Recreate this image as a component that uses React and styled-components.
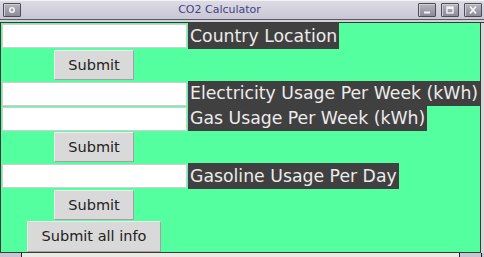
import React from "react";
import styled, { createGlobalStyle } from "styled-components";

const Global = createGlobalStyle`
  html, body { margin: 0; padding: 0; background: #e6e6e6; }
  body { font-family: "DejaVu Sans", sans-serif; }
`;

const Window = styled.div`
  width: 484px;
  height: 257px;
  display: flex;
  flex-direction: column;
  background: #e4e4e4;
  box-sizing: border-box;
  overflow: hidden;
`;

const TitleBar = styled.div`
  height: 21px;
  box-sizing: border-box;
  border-top: 1px solid #f2f2f2;
  border-bottom: 1px solid #5a5a62;
  background: linear-gradient(#dcdae4, #c9c7d3);
  display: flex;
  align-items: center;
  padding: 0 2px 0 3px;
`;

const TitleButton = styled.div`
  width: 18px;
  height: 14px;
  box-sizing: border-box;
  border: 1px solid #4e4e56;
  border-radius: 1px;
  background: linear-gradient(#b6b4bf, #8c8a96);
  box-shadow: inset 1px 1px 0 #cfcdd8;
  display: flex;
  align-items: center;
  justify-content: center;
  margin-left: ${(p) => p.$gap || 0}px;
`;

const Title = styled.div`
  flex: 1;
  text-align: center;
  font-family: "DejaVu Sans", sans-serif;
  font-size: 11px;
  color: #433f8a;
  line-height: 14px;
`;

const FrameGap = styled.div`
  height: 2px;
  background: #d2d0d8;
  border-bottom: 1px solid #3a3a3a;
`;

const Body = styled.div`
  flex: 1;
  display: flex;
`;

const Content = styled.div`
  width: 481px;
  box-sizing: border-box;
  border-left: 1px solid #3a3a3a;
  border-right: 1px solid #3a3a3a;
  border-bottom: 1px solid #3a3a3a;
  background: #54ff9f;
  display: grid;
  grid-template-columns: 187px 1fr;
  grid-template-rows: 26px 32px 25px 25px 32px 26px 31px 32px;
  align-content: start;
  height: 230px;
`;

const Entry = styled.input`
  grid-column: 1;
  align-self: center;
  justify-self: start;
  margin: 0 0 0 1px;
  width: 185px;
  height: 24px;
  box-sizing: border-box;
  border: 1px solid #cfcfcf;
  background: #ffffff;
  padding: 0 3px;
  outline: none;
`;

const Caption = styled.div`
  grid-column: 2;
  justify-self: start;
  align-self: stretch;
  background: #404040;
  color: #ececec;
  font-family: "DejaVu Sans", sans-serif;
  font-size: 17.3px;
  line-height: ${(p) => p.$h}px;
  height: ${(p) => p.$h}px;
  padding: 0 2px 0 2px;
  white-space: nowrap;
`;

const Button = styled.button`
  grid-column: 1;
  justify-self: center;
  align-self: center;
  width: ${(p) => (p.$wide ? 134 : 80)}px;
  height: ${(p) => (p.$wide ? 31 : 30)}px;
  box-sizing: border-box;
  margin: 0 0 0 -1px;
  padding: 0;
  background: #d9d9d9;
  border: 1px solid;
  border-color: #ededed #a2a2a2 #a2a2a2 #ededed;
  border-radius: 0;
  font-family: "DejaVu Sans", sans-serif;
  font-size: 14.5px;
  color: #222222;
`;

const Spacer = styled.div`
  grid-column: 2;
`;

const SideFrame = styled.div`
  flex: 1;
  background: #d8d8d8;
`;

const BottomFrame = styled.div`
  height: 4px;
  display: flex;
  background: #eceae4;
`;

const Handle = styled.div`
  width: ${(p) => p.$w}px;
  background: #c8c6d2;
  border-right: ${(p) => (p.$left ? "1px solid #222" : "0")};
  border-left: ${(p) => (p.$left ? "0" : "1px solid #222")};
`;

const Fill = styled.div`
  flex: 1;
`;

function Glyph({ kind }) {
  if (kind === "menu")
    return (
      <svg width="8" height="8" viewBox="0 0 8 8">
        <circle cx="4" cy="4" r="2.2" fill="none" stroke="#f4f4f4" strokeWidth="1.6" />
      </svg>
    );
  if (kind === "min")
    return (
      <svg width="10" height="8" viewBox="0 0 10 8">
        <rect x="2" y="5.5" width="6" height="2" fill="#f4f4f4" />
      </svg>
    );
  if (kind === "max")
    return (
      <svg width="10" height="8" viewBox="0 0 10 8">
        <rect x="2" y="1" width="6" height="6" fill="none" stroke="#f4f4f4" strokeWidth="1.4" />
        <rect x="2" y="1" width="6" height="2" fill="#f4f4f4" />
      </svg>
    );
  return (
    <svg width="10" height="8" viewBox="0 0 10 8">
      <path d="M2 0.5 L8 7.5 M8 0.5 L2 7.5" stroke="#f4f4f4" strokeWidth="1.8" />
    </svg>
  );
}

export default function App() {
  return (
    <>
      <Global />
      <Window>
        <TitleBar>
          <TitleButton>
            <Glyph kind="menu" />
          </TitleButton>
          <Title>CO2 Calculator</Title>
          <TitleButton>
            <Glyph kind="min" />
          </TitleButton>
          <TitleButton $gap={5}>
            <Glyph kind="max" />
          </TitleButton>
          <TitleButton $gap={5}>
            <Glyph kind="close" />
          </TitleButton>
        </TitleBar>
        <FrameGap />
        <Body>
          <Content>
            <Entry />
            <Caption $h={26}>Country Location</Caption>
            <Button>Submit</Button>
            <Spacer />
            <Entry />
            <Caption $h={25}>Electricity Usage Per Week (kWh)</Caption>
            <Entry />
            <Caption $h={25}>Gas Usage Per Week (kWh)</Caption>
            <Button>Submit</Button>
            <Spacer />
            <Entry />
            <Caption $h={26}>Gasoline Usage Per Day</Caption>
            <Button>Submit</Button>
            <Spacer />
            <Button $wide>Submit all info</Button>
            <Spacer />
          </Content>
          <SideFrame />
        </Body>
        <BottomFrame>
          <Handle $w={21} $left />
          <Fill />
          <Handle $w={21} />
          <Handle $w={2} />
        </BottomFrame>
      </Window>
    </>
  );
}
